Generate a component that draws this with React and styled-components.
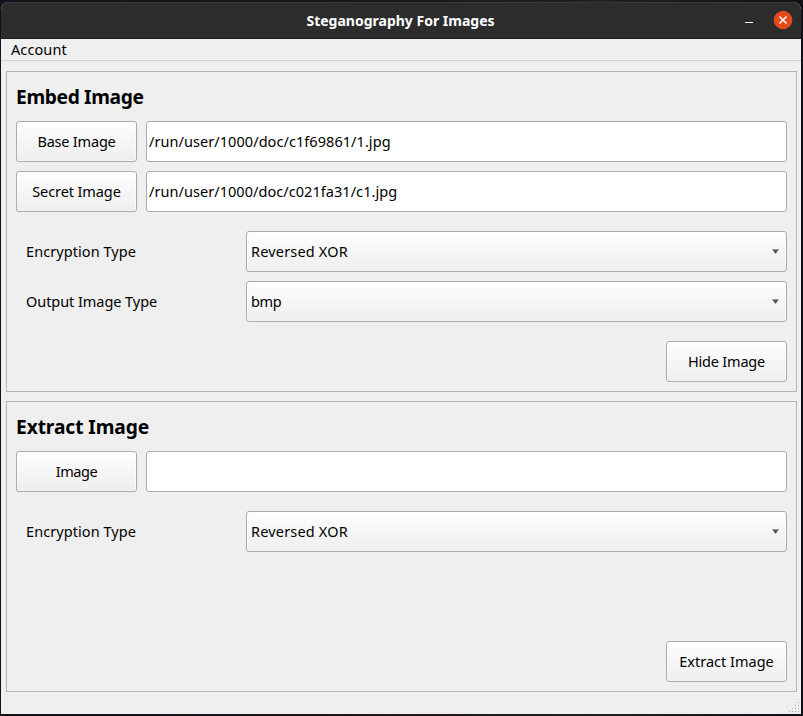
import React from "react";
import styled, { createGlobalStyle } from "styled-components";

const GlobalStyle = createGlobalStyle`
  * { box-sizing: border-box; }
  body { margin: 0; background: #131218; overflow: hidden; }
`;

const Desktop = styled.div`
  width: 803px;
  height: 716px;
  padding: 2px 2px 2px 1px;
  background: linear-gradient(90deg, #131119, #1e171c 50%, #222022 75%, #111017);
  font-family: "Noto Sans", sans-serif;
  font-size: 14.5px;
  line-height: 20px;
  color: #000;
`;

const Window = styled.main`
  display: flex;
  flex-direction: column;
  width: 800px;
  height: 712px;
  background: #efefef;
  border-radius: 8px 8px 0 0;
  overflow: hidden;
`;

const TitleBar = styled.header`
  display: grid;
  grid-template-columns: 1fr auto 1fr;
  align-items: center;
  height: 37px;
  flex: none;
  padding-right: 8px;
  background: #2c2c2c;
  border-top: 1px solid #383838;
  border-bottom: 1px solid #211c20;
`;

const Title = styled.h1`
  grid-column: 2;
  margin: 0 0 0 7px;
  font-size: 14px;
  line-height: 20px;
  font-weight: 700;
  color: #fff;
`;

const Controls = styled.div`
  display: flex;
  justify-content: flex-end;
  gap: 21px;
`;

const ControlButton = styled.button`
  display: block;
  padding: 0;
  border: 0;
  background: none;
  height: 19px;
  svg { display: block; }
`;

const MenuBar = styled.nav`
  flex: none;
  height: 22px;
  padding: 0 10px;
  border-bottom: 1px solid #d2d2d2;
`;

const Content = styled.div`
  display: flex;
  flex-direction: column;
  gap: 9px;
  padding: 10px 4px 0 5px;
`;

const Panel = styled.section`
  display: flex;
  flex-direction: column;
  height: ${(p) => p.$height}px;
  padding: 9px;
  border: 1px solid #b5b5b5;
`;

const PanelTitle = styled.h2`
  margin: 0 0 11px;
  height: 29px;
  font-size: 19.2px;
  line-height: 31px;
  font-weight: 700;
`;

const FileRow = styled.div`
  display: flex;
  gap: 9px;
  margin-bottom: 9px;
`;

const FormRow = styled.div`
  display: grid;
  grid-template-columns: 220px 541px;
  margin-left: 10px;
  margin-bottom: 9px;
  align-items: center;
`;

const FormGroup = styled.div`
  width: 771px;
  margin-top: 10px;
`;

const PushButton = styled.button`
  width: 121px;
  height: 41px;
  flex: none;
  padding: 0 0 2px;
  border: 1px solid #ababab;
  border-radius: 3px;
  background: linear-gradient(#fefefe, #eeeeee);
  box-shadow: inset 0 0 0 1px rgba(255, 255, 255, 0.45);
  font: inherit;
  color: inherit;
`;

const PathField = styled.div`
  flex: 1;
  height: 41px;
  padding: 9px 2px;
  border: 1px solid #ababab;
  border-radius: 3px;
  background: #fff;
`;

const Select = styled.div`
  display: flex;
  align-items: center;
  justify-content: space-between;
  height: 41px;
  padding: 0 7px 0 4px;
  border: 1px solid #ababab;
  border-radius: 3px;
  background: linear-gradient(#fefefe, #eeeeee);
  box-shadow: inset 0 0 0 1px rgba(255, 255, 255, 0.45);
`;

const Actions = styled.div`
  display: flex;
  justify-content: flex-end;
  margin-top: auto;
`;

const Label = styled.span`
  white-space: nowrap;
  letter-spacing: ${(p) => p.$track || 0}px;
`;

const FormLabel = styled(Label)`
  padding-bottom: 2px;
`;

const StatusBar = styled.footer`
  display: flex;
  flex: 1;
  align-items: flex-end;
  justify-content: flex-end;
  padding: 0 2px 2px 0;
`;

const Arrow = () => (
  <svg width="7" height="5" viewBox="0 0 7 5">
    <path d="M0 0H7L4 4.5H3Z" fill="#555" />
    <path d="M0 0.5H7" stroke="#999" />
  </svg>
);

const gripDots = [
  [9, 0], [6, 3], [9, 3], [3, 6], [6, 6], [9, 6], [0, 9], [3, 9], [6, 9], [9, 9],
];

const Grip = () => (
  <svg width="10" height="10">
    {gripDots.map(([x, y]) => (
      <rect key={`${x}-${y}`} x={x} y={y} width="1" height="1" fill="#aaa" />
    ))}
  </svg>
);

function Choice({ label, track, value, valueTrack }) {
  return (
    <FormRow>
      <FormLabel $track={track}>{label}</FormLabel>
      <Select>
        <FormLabel $track={valueTrack}>{value}</FormLabel>
        <Arrow />
      </Select>
    </FormRow>
  );
}

function FilePicker({ label, track, path, pathTrack }) {
  return (
    <FileRow>
      <PushButton><Label $track={track}>{label}</Label></PushButton>
      <PathField><Label $track={pathTrack}>{path}</Label></PathField>
    </FileRow>
  );
}

export default function App() {
  return (
    <Desktop>
      <GlobalStyle />
      <Window>
        <TitleBar>
          <Title><Label>Steganography For Images</Label></Title>
          <Controls>
            <ControlButton aria-label="Minimize">
              <svg width="8" height="19"><rect y="11" width="8" height="1" fill="#fff" /></svg>
            </ControlButton>
            <ControlButton aria-label="Close">
              <svg width="19" height="19" viewBox="0 0 19 19" overflow="visible">
                <circle cx="9" cy="9" r="9.3" fill="#e2491b" />
                <path d="M5.5 5.5L12.5 12.5M12.5 5.5L5.5 12.5" stroke="#fff" strokeWidth="1.5" />
              </svg>
            </ControlButton>
          </Controls>
        </TitleBar>
        <MenuBar><Label $track={0.1}>Account</Label></MenuBar>
        <Content>
          <Panel $height={321}>
            <PanelTitle><Label $track={-0.35}>Embed Image</Label></PanelTitle>
            <FilePicker label="Base Image" track={-0.2} path="/run/user/1000/doc/c1f69861/1.jpg" pathTrack={0.06} />
            <FilePicker label="Secret Image" track={-0.1} path="/run/user/1000/doc/c021fa31/c1.jpg" pathTrack={0.05} />
            <FormGroup>
              <Choice label="Encryption Type" track={0.07} value="Reversed XOR" valueTrack={0.17} />
              <Choice label="Output Image Type" track={-0.06} value="bmp" valueTrack={-0.3} />
            </FormGroup>
            <Actions>
              <PushButton><Label $track={-0.2}>Hide Image</Label></PushButton>
            </Actions>
          </Panel>
          <Panel $height={291}>
            <PanelTitle><Label $track={-0.1}>Extract Image</Label></PanelTitle>
            <FilePicker label="Image" track={-0.4} path="" />
            <FormGroup>
              <Choice label="Encryption Type" track={0.07} value="Reversed XOR" valueTrack={0.17} />
            </FormGroup>
            <Actions>
              <PushButton><Label>Extract Image</Label></PushButton>
            </Actions>
          </Panel>
        </Content>
        <StatusBar><Grip /></StatusBar>
      </Window>
    </Desktop>
  );
}
